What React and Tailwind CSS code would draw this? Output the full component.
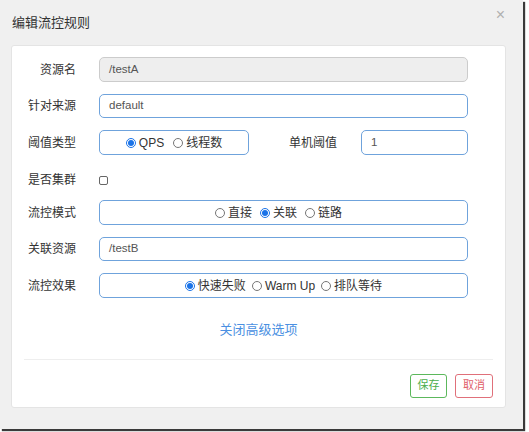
import React from "react";

const font = { fontFamily: '"Liberation Sans", "Noto Sans CJK SC", sans-serif' };

function Radio({ checked, label }) {
  return (
    <span className="flex items-center gap-[3px]">
      {checked ? (
        <span className="w-[10px] h-[10px] rounded-full border border-[#1a73e8] flex items-center justify-center bg-white">
          <span className="w-[6px] h-[6px] rounded-full bg-[#1a73e8]"></span>
        </span>
      ) : (
        <span className="w-[10px] h-[10px] rounded-full border border-[#767676] bg-white"></span>
      )}
      <span>{label}</span>
    </span>
  );
}

function Label({ children }) {
  return <div className="w-[64px] shrink-0 text-right text-[12px] text-[#333]">{children}</div>;
}

function Row({ label, children, className }) {
  return (
    <div className={"flex items-center " + className}>
      <Label>{label}</Label>
      <div className="ml-[23px] flex-1 flex items-center">{children}</div>
    </div>
  );
}

export default function App() {
  return (
    <div className="w-[529px] h-[432px] bg-white" style={font}>
      <div className="w-[523px] h-[429px] bg-[#f0f0f0] shadow-[2px_2px_1px_#3a3a3a] flex flex-col relative">
        <span className="absolute right-[18px] top-[3px] text-[16px] text-[#b0b0b0]">×</span>
        <div className="h-[45px] pl-[12px] flex items-center text-[13px] text-[#333]">编辑流控规则</div>
        <div className="mx-[11px] w-[495px] h-[363px] bg-white rounded-[3px] border border-[#e4e4e4] pt-[11px] flex flex-col">
          <Row label="资源名">
            <div className="w-[369px] h-[25px] bg-[#eeeeee] border border-[#cccccc] rounded-[5px] pl-[9px] flex items-center text-[11.5px] text-[#555]">/testA</div>
          </Row>
          <Row label="针对来源" className="mt-[12px]">
            <div className="w-[369px] h-[24px] border border-[#6fa3dc] rounded-[5px] pl-[9px] flex items-center text-[11.5px] text-[#555]">default</div>
          </Row>
          <Row label="阈值类型" className="mt-[12px]">
            <div className="w-[150px] h-[25px] border border-[#6fa3dc] rounded-[5px] flex items-center justify-center gap-[9px] text-[12px] text-[#333]">
              <Radio checked label="QPS" />
              <Radio label="线程数" />
            </div>
            <div className="ml-[40px] text-[12px] text-[#333]">单机阈值</div>
            <div className="ml-[24px] w-[107px] h-[25px] border border-[#6fa3dc] rounded-[5px] pl-[9px] flex items-center text-[11.5px] text-[#555]">1</div>
          </Row>
          <Row label="是否集群" className="mt-[15px] h-[20px]">
            <span className="w-[9px] h-[9px] border border-[#666] rounded-[2px] bg-white"></span>
          </Row>
          <Row label="流控模式" className="mt-[10px]">
            <div className="w-[369px] h-[25px] border border-[#6fa3dc] rounded-[5px] flex items-center justify-center gap-[8px] text-[12px] text-[#333] pr-[10px]">
              <Radio label="直接" />
              <Radio checked label="关联" />
              <Radio label="链路" />
            </div>
          </Row>
          <Row label="关联资源" className="mt-[12px]">
            <div className="w-[369px] h-[24px] border border-[#6fa3dc] rounded-[5px] pl-[9px] flex items-center text-[11.5px] text-[#555]">/testB</div>
          </Row>
          <Row label="流控效果" className="mt-[12px]">
            <div className="w-[369px] h-[25px] border border-[#6fa3dc] rounded-[5px] flex items-center justify-center gap-[6px] text-[12px] text-[#333]">
              <Radio checked label="快速失败" />
              <Radio label="Warm Up" />
              <Radio label="排队等待" />
            </div>
          </Row>
          <div className="mt-[22px] text-center text-[13px] text-[#4a90e2]">关闭高级选项</div>
          <div className="mx-[12px] mt-[19px] h-[1px] bg-[#eeeeee]"></div>
          <div className="mt-[14px] mr-[12px] flex justify-end gap-[8px]">
            <button className="w-[37px] h-[24px] border border-[#5cb85c] rounded-[3px] text-[11px] text-[#4cae4c] flex items-center justify-center">保存</button>
            <button className="w-[38px] h-[24px] border border-[#e0707a] rounded-[3px] text-[11px] text-[#e0606a] flex items-center justify-center">取消</button>
          </div>
        </div>
      </div>
    </div>
  );
}
